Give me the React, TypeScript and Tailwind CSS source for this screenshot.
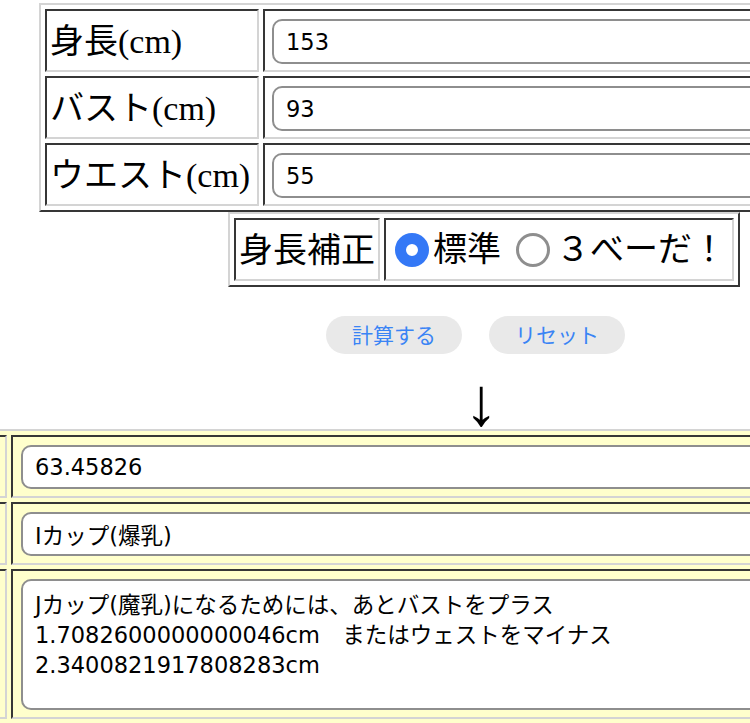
import React from "react";

const outerCls =
  "border-separate border-spacing-[4px] border-2 border-t-[#d4d4d4] border-l-[#d4d4d4] border-b-[#363636] border-r-[#363636]";
const cellCls =
  "border-2 border-t-[#363636] border-l-[#363636] border-b-[#d4d4d4] border-r-[#d4d4d4] p-0";
const serif = "font-['Liberation_Serif','Noto_Sans_CJK_JP',serif]";
const sans = "font-['DejaVu_Sans','Noto_Sans_CJK_JP',sans-serif]";

const inputCls = `block w-full rounded-[10px] border-2 border-[#8e8e8e] bg-white px-[12px] text-[22.5px] text-black outline-none ${sans}`;

const rows = [
  { label: "身長(cm)", value: "153" },
  { label: "バスト(cm)", value: "93" },
  { label: "ウエスト(cm)", value: "55" },
];

const advice =
  "Jカップ(魔乳)になるためには、あとバストをプラス\n1.7082600000000046cm　またはウェストをマイナス\n2.3400821917808283cm";

function Radio({ checked }: { checked: boolean }) {
  return checked ? (
    <span className="block h-[34px] w-[34px] shrink-0 rounded-full border-[11px] border-[#3478f6] bg-white" />
  ) : (
    <span className="block h-[34px] w-[34px] shrink-0 rounded-full border-[3px] border-[#8e8e8e] bg-white" />
  );
}

export default function App() {
  return (
    <div className="h-[723px] w-[750px] overflow-hidden bg-white pt-[3px] text-black">
      <table className={`${outerCls} ml-[39px] w-[780px]`}>
        <tbody>
          {rows.map((r) => (
            <tr key={r.label}>
              <td className={`${cellCls} w-[214px] whitespace-nowrap pl-[3px] pt-[3px] text-[34px] leading-none ${serif}`}>
                {r.label}
              </td>
              <td className={`${cellCls} pl-[7px] pt-[8px] pb-[6px]`}>
                <input readOnly value={r.value} className={`${inputCls} h-[45px]`} />
              </td>
            </tr>
          ))}
        </tbody>
      </table>

      <table className={`${outerCls} ml-[228px]`}>
        <tbody>
          <tr>
            <td className={`${cellCls} h-[63px] w-[146px] whitespace-nowrap pl-[3px] pt-[2px] text-[34px] leading-none ${serif}`}>
              身長補正
            </td>
            <td className={`${cellCls} h-[63px] w-[350px]`}>
              <div className={`flex items-center pl-[9px] text-[34px] leading-none ${serif}`}>
                <Radio checked />
                <span className="ml-[4px]">標準</span>
                <span className="ml-[15px]">
                  <Radio checked={false} />
                </span>
                <span className="ml-[6px] whitespace-nowrap">３べーだ！</span>
              </div>
            </td>
          </tr>
        </tbody>
      </table>

      <div className="ml-[326px] mt-[29px] flex gap-[27px]">
        <button className="h-[38px] w-[136px] rounded-full bg-[#e9e9e9] font-['Noto_Sans_CJK_JP',sans-serif] text-[21px] text-[#3a84f5]">
          計算する
        </button>
        <button className="h-[38px] w-[136px] rounded-full bg-[#e9e9e9] font-['Noto_Sans_CJK_JP',sans-serif] text-[21px] text-[#3a84f5]">
          リセット
        </button>
      </div>

      <div className={`ml-[464px] h-[75px] pt-[14px] text-[68px] leading-[68px] ${serif}`}>↓</div>

      <table className={`${outerCls} ml-[-60px] w-[900px] bg-[#ffffcc]`}>
        <tbody>
          <tr>
            <td className={`${cellCls} w-[61px]`} />
            <td className={`${cellCls} pl-[8px] pt-[8px] pb-[7px]`}>
              <input readOnly value="63.45826" className={`${inputCls} h-[44px]`} />
            </td>
          </tr>
          <tr>
            <td className={`${cellCls} w-[61px]`} />
            <td className={`${cellCls} pl-[8px] pt-[8px] pb-[7px]`}>
              <input readOnly value="Iカップ(爆乳)" className={`${inputCls} h-[44px]`} />
            </td>
          </tr>
          <tr>
            <td className={`${cellCls} w-[61px]`} />
            <td className={`${cellCls} pl-[8px] pt-[8px] pb-[7px]`}>
              <textarea
                readOnly
                value={advice}
                className={`${inputCls} h-[131px] resize-none pt-[9px] pb-0 leading-[30px]`}
              />
            </td>
          </tr>
        </tbody>
      </table>
    </div>
  );
}
